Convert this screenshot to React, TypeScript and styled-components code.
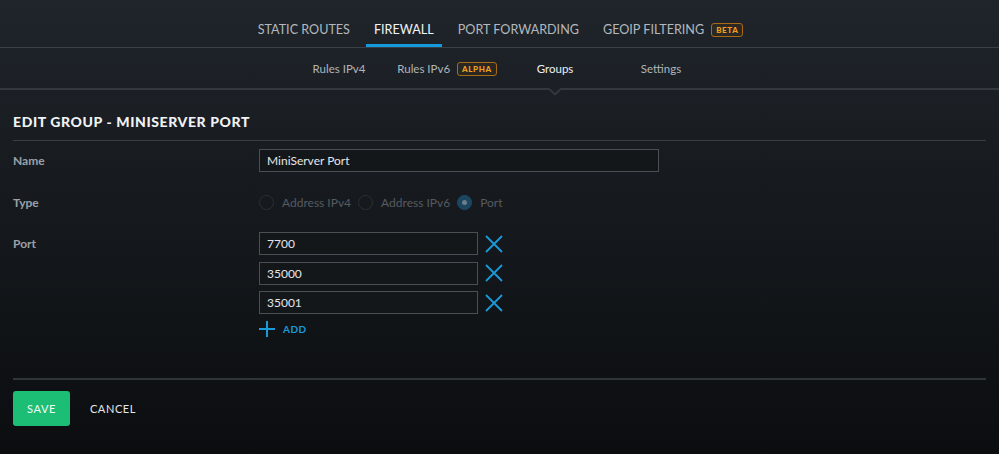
import styled, { createGlobalStyle } from "styled-components";

const GlobalStyle = createGlobalStyle`
  html, body {
    margin: 0;
    padding: 0;
    height: 100%;
  }
  body {
    background: linear-gradient(180deg, #20252b 0%, #181c21 35%, #101316 75%, #0b0d0f 100%);
    font-family: Lato, "Open Sans", sans-serif;
    color: #e6e8ea;
    min-height: 454px;
  }
`;

const Page = styled.div`
  width: 999px;
  height: 454px;
  overflow: hidden;
`;

const TopNav = styled.nav`
  display: flex;
  justify-content: center;
  align-items: flex-end;
  height: 47px;
  border-bottom: 1px solid #3a3f45;
  padding-left: 2px;
`;

const TopTab = styled.div<{ $active?: boolean }>`
  display: flex;
  align-items: center;
  gap: 7px;
  height: 31px;
  padding: 0 8px 1px;
  margin: 0 4px;
  font-size: 12.6px;
  text-transform: uppercase;
  color: ${(p) => (p.$active ? "#f2f4f6" : "#b3b8bd")};
  border-bottom: 3px solid ${(p) => (p.$active ? "#149bde" : "transparent")};
  box-sizing: border-box;
`;

const Badge = styled.span`
  display: inline-block;
  border: 1px solid #a86a17;
  border-radius: 3px;
  color: #f0a020;
  font-size: 8px;
  font-weight: 900;
  letter-spacing: 0.6px;
  padding: 1px 4px;
  line-height: 10px;
  background: rgba(120, 75, 10, 0.15);
`;

const SubNav = styled.nav`
  display: grid;
  grid-template-columns: 107px 109px 107px 105px;
  justify-content: center;
  height: 42px;
  border-bottom: 2px solid #33383e;
  box-sizing: border-box;
`;

const SubTab = styled.div<{ $active?: boolean }>`
  position: relative;
  display: flex;
  align-items: center;
  justify-content: center;
  gap: 7px;
  font-size: 11.5px;
  color: ${(p) => (p.$active ? "#eef0f2" : "#b0b5ba")};
  padding-top: 1px;
`;

const Caret = styled.svg`
  position: absolute;
  left: 50%;
  bottom: -8px;
  transform: translateX(-50%);
`;

const Content = styled.main`
  padding: 0 13px;
`;

const Heading = styled.h1`
  margin: 0;
  padding: 24px 0 10px;
  font-size: 14px;
  font-weight: 900;
  letter-spacing: 0.6px;
  color: #f0f2f4;
  border-bottom: 1px solid #3a3f45;
  line-height: 16px;
`;

const Form = styled.div`
  display: grid;
  grid-template-columns: 246px 1fr;
  row-gap: 18.5px;
  padding: 8px 0 41px;
  border-bottom: 2px solid #30353a;
`;

const Label = styled.div`
  font-size: 12px;
  font-weight: 700;
  color: #9ba1a7;
  line-height: 23px;
`;

const TextInput = styled.input<{ $width: number }>`
  width: ${(p) => p.$width}px;
  height: 23px;
  box-sizing: border-box;
  background: #14171a;
  border: 1px solid #4a4f55;
  color: #e4e6e8;
  font-family: Lato, "Open Sans", sans-serif;
  font-size: 12px;
  padding: 0 7px;
  outline: none;
`;

const RadioRow = styled.div`
  display: flex;
  align-items: center;
  height: 23px;
`;

const RadioOption = styled.label`
  display: flex;
  align-items: center;
  gap: 8px;
  margin-right: 7px;
  font-size: 12px;
  color: #555b61;
`;

const RadioCircle = styled.span<{ $checked?: boolean }>`
  width: 15px;
  height: 15px;
  box-sizing: border-box;
  border-radius: 50%;
  border: 1px solid ${(p) => (p.$checked ? "#1d4a66" : "#2b3035")};
  background: ${(p) => (p.$checked ? "#1c4560" : "transparent")};
  display: flex;
  align-items: center;
  justify-content: center;
  &::after {
    content: "";
    display: ${(p) => (p.$checked ? "block" : "none")};
    width: 5px;
    height: 5px;
    border-radius: 50%;
    background: #6d7e8a;
  }
`;

const PortList = styled.div`
  display: flex;
  flex-direction: column;
  gap: 6.5px;
`;

const PortRow = styled.div`
  display: flex;
  align-items: center;
  gap: 7px;
`;

const IconButton = styled.button`
  background: none;
  border: none;
  padding: 0;
  width: 18px;
  height: 18px;
  display: flex;
  cursor: pointer;
`;

const AddButton = styled.button`
  display: flex;
  align-items: center;
  gap: 8px;
  background: none;
  border: none;
  padding: 0;
  height: 16px;
  color: #1a9ad8;
  font-family: Lato, "Open Sans", sans-serif;
  font-size: 10px;
  font-weight: 700;
  letter-spacing: 0.5px;
  cursor: pointer;
`;

const Actions = styled.div`
  display: flex;
  align-items: center;
  gap: 6px;
  padding-top: 11px;
`;

const Button = styled.button<{ $primary?: boolean }>`
  height: 35px;
  padding: 0 14px;
  border: none;
  border-radius: 3px;
  background: ${(p) => (p.$primary ? "#1cbd75" : "transparent")};
  color: ${(p) => (p.$primary ? "#f2fff8" : "#e4e6e8")};
  font-family: Lato, "Open Sans", sans-serif;
  font-size: 11px;
  letter-spacing: 0.6px;
  text-transform: uppercase;
  cursor: pointer;
`;

function CloseIcon() {
  return (
    <svg width="18" height="18" viewBox="0 0 18 18">
      <path d="M1 1 L17 17 M17 1 L1 17" stroke="#1a9ad8" strokeWidth="1.8" />
    </svg>
  );
}

function PlusIcon() {
  return (
    <svg width="16" height="16" viewBox="0 0 16 16">
      <path d="M8 0 V16 M0 8 H16" stroke="#1a9ad8" strokeWidth="2" />
    </svg>
  );
}

const ports = ["7700", "35000", "35001"];

export default function App() {
  return (
    <Page>
      <GlobalStyle />
      <TopNav>
        <TopTab>Static Routes</TopTab>
        <TopTab $active>Firewall</TopTab>
        <TopTab>Port Forwarding</TopTab>
        <TopTab>
          GeoIP Filtering <Badge>BETA</Badge>
        </TopTab>
      </TopNav>
      <SubNav>
        <SubTab>Rules IPv4</SubTab>
        <SubTab>
          Rules IPv6 <Badge>ALPHA</Badge>
        </SubTab>
        <SubTab $active>
          Groups
          <Caret width="14" height="8" viewBox="0 0 14 8">
            <path d="M0 0 L7 6.5 L14 0" fill="#1c2025" stroke="#33383e" strokeWidth="2" />
          </Caret>
        </SubTab>
        <SubTab>Settings</SubTab>
      </SubNav>
      <Content>
        <Heading>EDIT GROUP - MINISERVER PORT</Heading>
        <Form>
          <Label>Name</Label>
          <TextInput $width={400} defaultValue="MiniServer Port" />
          <Label>Type</Label>
          <RadioRow>
            <RadioOption>
              <RadioCircle /> Address IPv4
            </RadioOption>
            <RadioOption>
              <RadioCircle /> Address IPv6
            </RadioOption>
            <RadioOption>
              <RadioCircle $checked /> Port
            </RadioOption>
          </RadioRow>
          <Label>Port</Label>
          <PortList>
            {ports.map((p) => (
              <PortRow key={p}>
                <TextInput $width={219} defaultValue={p} />
                <IconButton aria-label="remove">
                  <CloseIcon />
                </IconButton>
              </PortRow>
            ))}
            <AddButton>
              <PlusIcon /> ADD
            </AddButton>
          </PortList>
        </Form>
        <Actions>
          <Button $primary>Save</Button>
          <Button>Cancel</Button>
        </Actions>
      </Content>
    </Page>
  );
}
